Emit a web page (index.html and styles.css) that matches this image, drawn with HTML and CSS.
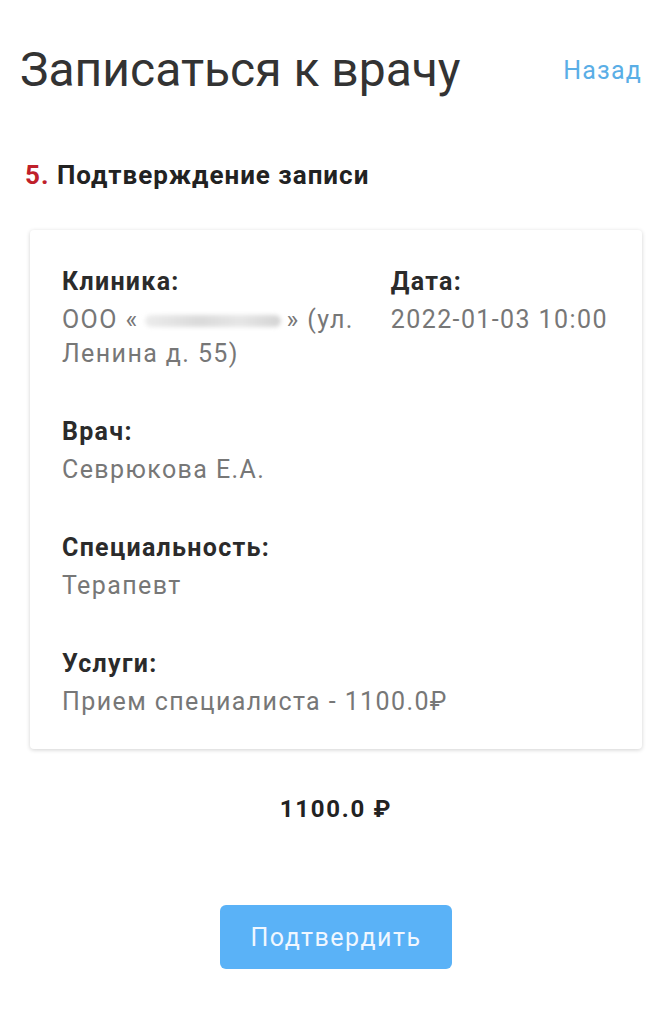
FILE: index.html
```html
<!DOCTYPE html>
<html>

<head>
	<title>Записаться к врачу</title>
	<link rel="stylesheet" href="styles.css">
</head>

<body>
	<div class="header">
		<h1>Записаться к врачу</h1>
		<a href="#" class="back">Назад</a>
	</div>

	<h2 class="step"><span class="step-num">5.</span> Подтверждение записи</h2>

	<div class="content">
		<div class="card">
			<div class="row">
				<div class="field col-main">
					<div class="label">Клиника:</div>
					<div class="value">ООО «<span class="hidden-name"></span>» (ул.<br>Ленина д. 55)</div>
				</div>
				<div class="field col-side">
					<div class="label">Дата:</div>
					<div class="value">2022-01-03 10:00</div>
				</div>
			</div>

			<div class="field">
				<div class="label">Врач:</div>
				<div class="value">Севрюкова Е.А.</div>
			</div>

			<div class="field">
				<div class="label">Специальность:</div>
				<div class="value">Терапевт</div>
			</div>

			<div class="field">
				<div class="label">Услуги:</div>
				<div class="value">Прием специалиста - 1100.0₽</div>
			</div>
		</div>

		<p class="total">1100.0 ₽</p>

		<div class="actions">
			<button type="button" class="confirm">Подтвердить</button>
		</div>
	</div>
</body>

</html>
```

FILE: styles.css
```css
body {
	font-family: Roboto, "Noto Sans", sans-serif;
	background-color: #fff;
	color: #333;
	margin: 0;
	padding: 0;
}

.header {
	display: flex;
	justify-content: space-between;
	align-items: center;
	padding: 40px 25px 0 20px;
}

h1 {
	margin: 0;
	font-size: 48px;
	font-weight: 400;
	line-height: 60px;
	color: #333;
}

.back {
	font-size: 25px;
	letter-spacing: 1.2px;
	color: #5aaee6;
	text-decoration: none;
	margin-right: -1px;
}

.step {
	margin: 59px 0 0 25px;
	font-size: 26px;
	font-weight: 700;
	line-height: 32px;
	letter-spacing: 1px;
	color: #222;
}

.step-num {
	color: #c0202a;
}

.content {
	padding: 0 24px 0 30px;
}

.card {
	margin-top: 39px;
	padding: 31px 32px 30px 32px;
	background-color: #fff;
	border-radius: 4px;
	box-shadow: 0 1px 4px rgba(0, 0, 0, 0.18);
}

.row {
	display: flex;
}

.col-main {
	width: 60%;
	padding-right: 16px;
	box-sizing: border-box;
}

.col-side {
	flex: 1;
}

.field {
	margin-bottom: 40px;
}

.card > .field:last-child {
	margin-bottom: 0;
}

.label {
	font-size: 25px;
	font-weight: 700;
	line-height: 42px;
	letter-spacing: 1.3px;
	color: #2b2b2b;
}

.value {
	font-size: 25px;
	line-height: 34px;
	letter-spacing: 1.4px;
	color: #777;
}

.hidden-name {
	display: inline-block;
	width: 136px;
	height: 12px;
	margin: 0 6px;
	vertical-align: middle;
	background: linear-gradient(90deg, #ececec, #dadada 40%, #e6e6e6 70%, #d4d4d4);
	border-radius: 6px;
	filter: blur(2px);
}

.total {
	margin: 43px 0 0 0;
	text-align: center;
	font-size: 24px;
	font-weight: 700;
	line-height: 34px;
	letter-spacing: 1.7px;
	color: #222;
}

.actions {
	display: flex;
	justify-content: center;
	margin-top: 79px;
}

.confirm {
	width: 232px;
	height: 64px;
	border: none;
	border-radius: 6px;
	background-color: #5ab2f7;
	color: #f0f7ff;
	font-family: Roboto, "Noto Sans", sans-serif;
	font-size: 25px;
	letter-spacing: 1.5px;
	cursor: pointer;
}
```
